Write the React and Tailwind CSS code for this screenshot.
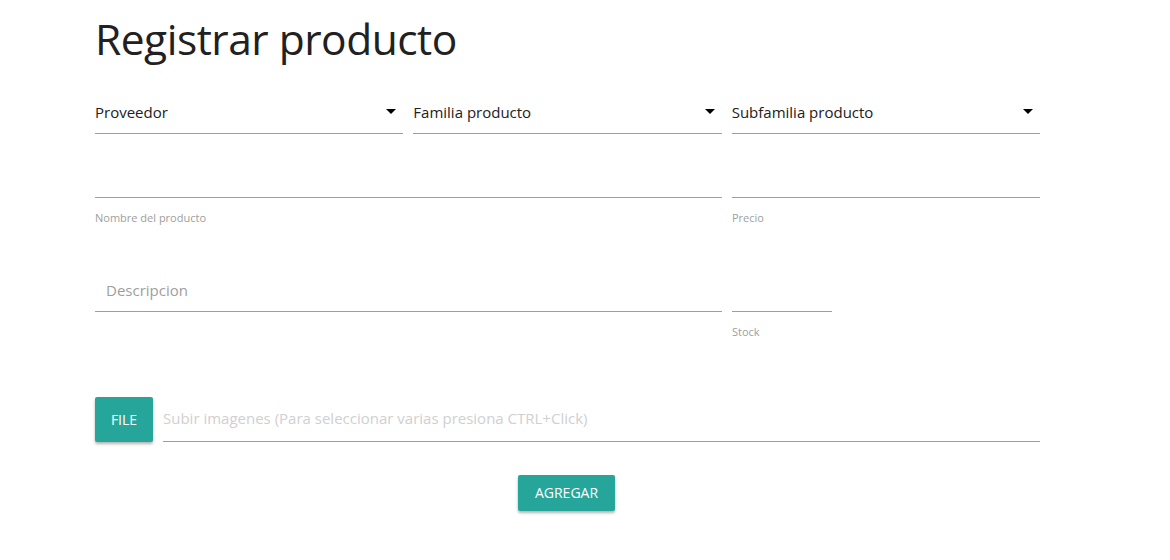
// App.jsx
const font = { fontFamily: '"Open Sans", "Noto Sans", sans-serif' };

function Caret() {
  return (
    <svg width="10" height="5" viewBox="0 0 10 5" className="shrink-0">
      <path d="M0 0 L10 0 L5 5 Z" fill="#000" />
    </svg>
  );
}

function Select({ label }) {
  return (
    <div className="flex-1">
      <div className="flex items-center justify-between h-[44px] border-b border-[#9e9e9e] pr-[7px]">
        <span className="text-[15px] text-[#212121] pt-[2px]">{label}</span>
        <Caret />
      </div>
    </div>
  );
}

function Field({ label, className = '', line = 'w-full' }) {
  return (
    <div className={className}>
      <div className={`h-[44px] border-b border-[#9e9e9e] ${line}`} />
      <div className="text-[11px] text-[#9e9e9e] mt-[12px]">{label}</div>
    </div>
  );
}

export default function App() {
  return (
    <div className="w-[1170px] h-[560px] bg-white" style={font}>
      <div className="w-[945px] ml-[95px]">
        <h1 className="text-[42.5px] leading-none text-[#212121] pt-[18px] tracking-[-0.5px]">Registrar producto</h1>

        <div className="flex gap-[10px] mt-[29px]">
          <Select label="Proveedor" />
          <Select label="Familia producto" />
          <Select label="Subfamilia producto" />
        </div>

        <div className="flex gap-[10px] mt-[20px]">
          <Field label="Nombre del producto" className="w-[627px]" />
          <Field label="Precio" className="flex-1" />
        </div>

        <div className="flex gap-[10px] mt-[42px]">
          <div className="w-[627px]">
            <div className="h-[44px] border-b border-[#9e9e9e] flex items-center pl-[11px] pt-[2px]">
              <span className="text-[15px] text-[#9e9e9e]">Descripcion</span>
            </div>
          </div>
          <Field label="Stock" className="flex-1" line="w-[100px]" />
        </div>

        <div className="flex items-end gap-[10px] mt-[56px]">
          <button className="w-[58px] h-[45px] rounded-[2px] bg-[#26a69a] text-white text-[14px] shadow-[0_2px_3px_rgba(0,0,0,0.3)]">
            FILE
          </button>
          <div className="flex-1 h-[45px] border-b border-[#9e9e9e] flex items-center">
            <span className="text-[15px] text-[#d0d0d0]">Subir imagenes (Para seleccionar varias presiona CTRL+Click)</span>
          </div>
        </div>

        <div className="flex justify-center mt-[33px] pr-[2px]">
          <button className="w-[97px] h-[36px] rounded-[2px] bg-[#26a69a] text-white text-[14px] shadow-[0_2px_3px_rgba(0,0,0,0.3)]">
            AGREGAR
          </button>
        </div>
      </div>
    </div>
  );
}
